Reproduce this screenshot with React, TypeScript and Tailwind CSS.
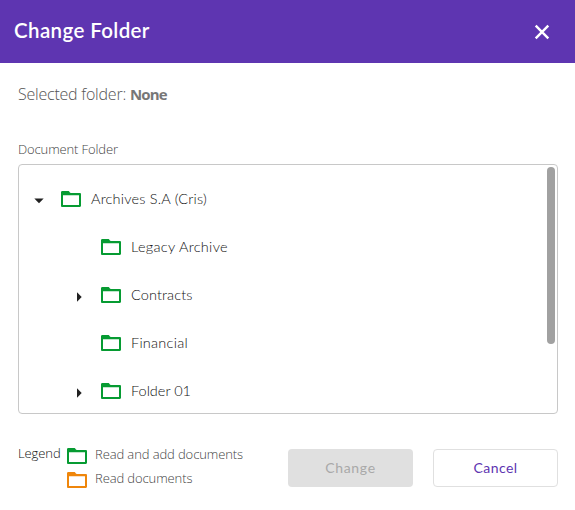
const muli = "font-['Lato','Open_Sans',sans-serif]";
const klavika = "font-['Open_Sans','Noto_Sans',sans-serif]";

function Folder({ className }: { className: string }) {
  return (
    <svg viewBox="0 0 24 24" className={`size-6 shrink-0 fill-current ${className}`}>
      <path d="M20.8 6H12c-.7 0-1-.3-1.3-.8-.4-.8-.8-1.2-1.7-1.2H3.4C2.5 4 2 4.6 2 5.4v13.4c0 .8.5 1.2 1.2 1.2h17.6c.7 0 1.2-.5 1.2-1.2V7.2c0-.7-.5-1.2-1.2-1.2zM20 18H4V8.2h16V18z" />
    </svg>
  );
}

type Row = { label: string; arrow: "down" | "right" | "none"; nested: boolean; track: string };

const rows: Row[] = [
  { label: "Archives S.A (Cris)", arrow: "down", nested: false, track: "tracking-[0.2px]" },
  { label: "Legacy Archive", arrow: "none", nested: true, track: "tracking-[0.3px]" },
  { label: "Contracts", arrow: "right", nested: true, track: "tracking-[0.1px]" },
  { label: "Financial", arrow: "none", nested: true, track: "tracking-[0.25px]" },
  { label: "Folder 01", arrow: "right", nested: true, track: "tracking-[0px]" },
];

function TreeRow({ label, arrow, nested, track }: Row) {
  return (
    <div className={`flex h-12 items-center ${nested ? "pl-[52px]" : "pl-3"}`}>
      <svg viewBox="0 0 16 16" className="mt-[3px] size-4 shrink-0 fill-[#212121]">
        {arrow === "down" && <path d="M3.3 5.5h9.4L8 10.2z" />}
        {arrow === "right" && <path d="M6 3.3v9.4L10.7 8z" />}
      </svg>
      <Folder className="ml-3 text-[#069b32]" />
      <span className={`ml-2 text-[14.5px] leading-5 font-light whitespace-nowrap text-[#111] ${track}`}>{label}</span>
    </div>
  );
}

export default function App() {
  return (
    <div className={`flex h-[510px] w-[575px] flex-col overflow-hidden bg-white ${muli}`}>
      <header className="flex h-[63px] shrink-0 items-center justify-between bg-[#5e35b1] pr-[25px] pl-[14px] text-white">
        <h1 className="-mt-[3px] text-[20.5px] leading-6 font-semibold tracking-[0.38px]">Change Folder</h1>
        <button aria-label="Close" className="mt-px">
          <svg viewBox="0 0 16 16" className="size-4 fill-none stroke-white stroke-[2.4]">
            <path d="M1.7 1.7l12.6 12.6M14.3 1.7l-12.6 12.6" />
          </svg>
        </button>
      </header>
      <p className={`mt-[19px] ml-[18px] text-[16px] leading-6 font-light tracking-[-0.22px] whitespace-nowrap text-[#555] ${klavika}`}>
        Selected folder: <b className="text-[15px] font-bold tracking-[-0.8px] text-[#777]">None</b>
      </p>
      <p className={`mt-[34px] ml-[18px] text-[13px] leading-[18px] font-light tracking-[-0.12px] text-[#444] ${klavika}`}>Document Folder</p>
      <div className="mr-[17px] mt-[6px] ml-[18px] flex h-[250px] shrink-0 justify-between overflow-hidden rounded-[4px] border border-[#c8c8c8] pt-[10px]">
        <div className="w-[400px]">
          {rows.map((r) => <TreeRow key={r.label} {...r} />)}
        </div>
        <div className="-mt-2 mr-[2px] h-[177px] w-2 rounded-full bg-[#a1a1a1]" />
      </div>
      <footer className="mt-[29px] mr-[17px] ml-[18px] flex">
        <div className={`flex text-[13px] leading-6 font-light whitespace-nowrap ${klavika}`}>
          <span className="-mt-[2px] w-[47px] tracking-[-0.1px] text-[#111]">Legend</span>
          <div className="tracking-[-0.1px]">
            <div className="flex h-6"><Folder className="mt-px text-[#069b32]" /><span className="-mt-px ml-[6px] text-[#444]">Read and add documents</span></div>
            <div className="flex h-6"><Folder className="mt-px text-[#ef860b]" /><span className="-mt-px ml-[6px] text-[#444]">Read documents</span></div>
          </div>
        </div>
        <div className="mt-[6px] ml-auto flex gap-5 text-[14px]">
          <button className="h-[38px] w-[125px] rounded-[4px] bg-[#e0e0e0] pb-0.5 tracking-[0.65px] text-[#a9a9a9]">Change</button>
          <button className="h-[38px] w-[125px] rounded-[4px] border border-[#e0e0e0] pb-0.5 tracking-[0.45px] text-[#5e35b1]">Cancel</button>
        </div>
      </footer>
    </div>
  );
}
